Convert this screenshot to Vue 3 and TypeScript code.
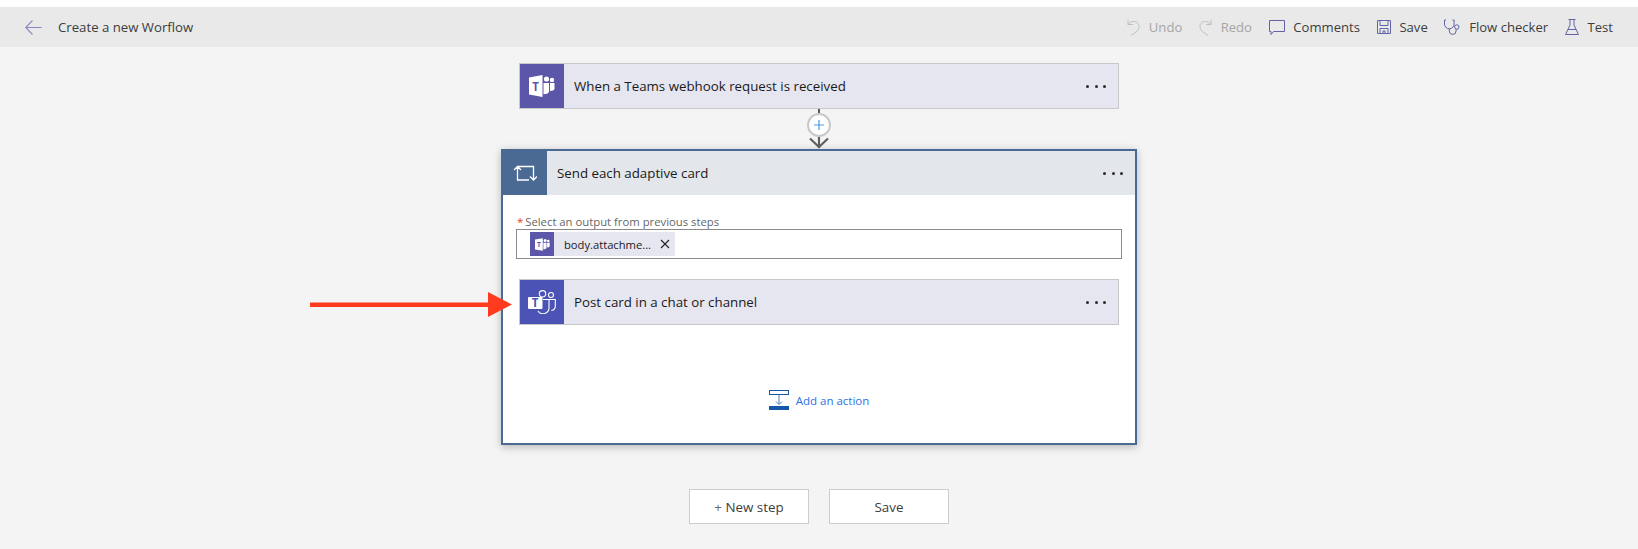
<template>
  <div class="page">
    <header class="toolbar">
      <svg class="back" width="17" height="15" viewBox="0 0 17 15">
        <path d="M7.500.5.700 7.500l6.800 7M.7 7.500H16.500" />
      </svg>
      <span class="title">Create a new Worflow</span>
      <div class="actions">
        <button class="action disabled">
          <svg width="13" height="17" viewBox="0 0 13 17"><path d="M1 .5v5h5M1 5.500C3 2.500 7 1.500 10 3.500c3.500 2.500 2 7-1 9.500l-5 3.500" /></svg>
          <span>Undo</span>
        </button>
        <button class="action disabled">
          <svg width="13" height="17" viewBox="0 0 13 17"><path d="M12 .5v5H7M12 5.500C10 2.500 6 1.500 3 3.500c-3.500 2.500-2 7 1 9.500l5 3.500" /></svg>
          <span>Redo</span>
        </button>
        <button class="action">
          <svg width="16" height="15" viewBox="0 0 16 15"><path d="M.5.500h15v11H4.500l-2.500 3v-3H.5z" /></svg>
          <span>Comments</span>
        </button>
        <button class="action">
          <svg width="14" height="14" viewBox="0 0 14 14"><path d="M.5.500h13v13H.5zM3 .5v5h8V.5M3 13.500V8.500h8v5M6 13.500v-2.500h2v2.500" /></svg>
          <span>Save</span>
        </button>
        <button class="action">
          <svg width="16" height="16" viewBox="0 0 16 16"><path d="M2 1H.5v4a4.800 4.800 0 0 0 9.600 0V1H8.500M5.300 9.800V12a3.400 3.400 0 0 0 6.800 0v-2" /><circle cx="12.800" cy="8" r="2.200" /></svg>
          <span>Flow checker</span>
        </button>
        <button class="action">
          <svg width="14" height="16" viewBox="0 0 14 16"><path d="M3.500.5h7M5 .5v5.500L.5 15.500h13L9 6V.5M3 10.500h8" /></svg>
          <span>Test</span>
        </button>
      </div>
    </header>

    <main class="canvas">
      <section class="step step-trigger">
        <div class="step-icon">
          <svg width="26" height="22" viewBox="0 0 26 22">
            <path class="fill" d="M0 2.500 13.500 0v22L0 19.500z" />
            <text x="6.700" y="15.500" class="t-purple">T</text>
            <circle class="fill" cx="17.500" cy="4" r="2.600" />
            <circle class="fill" cx="23" cy="5" r="2.200" />
            <path class="fill" d="M14.500 8h5.500v8.500c0 1.500-2 2.700-5.500 2.700z" />
            <path class="fill" d="M21 8h4.500v5.500c0 1.500-1.500 2.500-4.500 2.500z" />
          </svg>
        </div>
        <span class="step-name">When a Teams webhook request is received</span>
        <span class="dots"><i></i><i></i><i></i></span>
      </section>

      <div class="connector">
        <span class="stem"></span>
        <span class="plus">
          <svg width="10" height="10" viewBox="0 0 10 10"><path d="M5 0v10M0 5h10" /></svg>
        </span>
        <svg class="chevron" width="20" height="12" viewBox="0 0 20 12"><path d="M1 1.500l9 8.500 9-8.500M10 0v11" /></svg>
      </div>

      <section class="loop">
        <div class="loop-head">
          <div class="loop-icon">
            <svg width="24" height="18" viewBox="0 0 24 18">
              <path d="M4.500 2.500H20.500V16M4.500 2.500V16H16M1 6 4.500 2.500 8 6M17 12.500l3.500 3.500 3.500-3.500" />
            </svg>
          </div>
          <span class="step-name">Send each adaptive card</span>
          <span class="dots"><i></i><i></i><i></i></span>
        </div>

        <div class="loop-body">
          <label class="field-label"><em>*</em>Select an output from previous steps</label>
          <div class="field">
            <span class="chip">
              <span class="chip-icon">
                <svg width="15" height="13" viewBox="0 0 26 22">
                  <path class="fill" d="M0 2.500 13.500 0v22L0 19.500z" />
                  <text x="6.700" y="15.500" class="t-purple">T</text>
                  <circle class="fill" cx="17.500" cy="4" r="2.600" />
                  <circle class="fill" cx="23" cy="5" r="2.200" />
                  <path class="fill" d="M14.500 8h5.500v8.500c0 1.500-2 2.700-5.500 2.700z" />
                  <path class="fill" d="M21 8h4.500v5.500c0 1.500-1.500 2.500-4.500 2.500z" />
                </svg>
              </span>
              <span class="chip-text">body.attachme...</span>
              <svg class="chip-close" width="10" height="10" viewBox="0 0 10 10"><path d="M1 1l8 8M9 1l-8 8" /></svg>
            </span>
          </div>

          <section class="step step-post">
            <div class="step-icon">
              <svg width="28" height="24" viewBox="0 0 28 24">
                <path class="fill" d="M1 7h12.500a1 1 0 0 1 1 1v10a1 1 0 0 1-1 1H1a1 1 0 0 1-1-1V8a1 1 0 0 1 1-1z" />
                <text x="7.200" y="16.800" class="t-indigo">T</text>
                <circle class="ring" cx="14.500" cy="3.800" r="3.200" />
                <circle class="ring" cx="23" cy="5" r="2.500" />
                <path class="ring" d="M15 9.500H27.300v6.500a4.500 4.500 0 0 1-4 4.500M21 9.500V17.500a6 6 0 0 1-11 3.500" />
              </svg>
            </div>
            <span class="step-name">Post card in a chat or channel</span>
            <span class="dots"><i></i><i></i><i></i></span>
          </section>

          <a class="add-action">
            <svg width="20" height="20" viewBox="0 0 20 20">
              <rect x=".5" y=".5" width="19" height="4" fill="none" stroke="#1557a8" />
              <path d="M10 5v9M7 11.500l3 3 3-3" fill="none" stroke="#4a7fc1" />
              <rect y="16" width="20" height="4" fill="#1557a8" />
            </svg>
            <span>Add an action</span>
          </a>
        </div>
      </section>

      <div class="buttons">
        <button class="btn"><span class="btn-plus">+</span> New step</button>
        <button class="btn">Save</button>
      </div>
    </main>

    <svg class="callout" width="202" height="25" viewBox="0 0 202 25">
      <path d="M0 10.500h178V0l24 12.500L178 25V15H0z" />
    </svg>
  </div>
</template>

<script setup lang="ts">
</script>

<style>
html,
body {
  margin: 0;
  background: #fff;
}
</style>

<style scoped>
.page {
  position: relative;
  width: 1638px;
  height: 549px;
  padding-top: 7px;
  box-sizing: border-box;
  overflow: hidden;
  font-family: "Open Sans", "Liberation Sans", sans-serif;
  color: #1f1f1f;
}

.toolbar {
  display: flex;
  align-items: center;
  height: 40px;
  padding: 0 25px;
  background: #e9e9e9;
}

.back {
  fill: none;
  stroke: #8a86bf;
  stroke-width: 1.100;
}

.title {
  margin-left: 16px;
  font-size: 13.200px;
  color: #3c3c3c;
}

.actions {
  display: flex;
  align-items: center;
  gap: 16.700px;
  margin-left: auto;
}

.action {
  display: flex;
  align-items: center;
  gap: 8.700px;
  padding: 0;
  border: 0;
  background: none;
  font: inherit;
  font-size: 13.100px;
  color: #3c3c3c;
}

.action svg {
  fill: none;
  stroke: #6264a7;
  stroke-width: 1;
}

.action.disabled {
  color: #a6a6a6;
}

.action.disabled svg {
  stroke: #c0c0c0;
}

.canvas {
  display: flex;
  flex-direction: column;
  align-items: center;
  height: 502px;
  background: #f4f4f4;
}

.step {
  display: flex;
  align-items: center;
  box-sizing: border-box;
  flex: none;
  width: 600px;
  height: 46px;
  border: 1px solid #c8c8c8;
  background: #e6e6f1;
}

.step-trigger {
  margin-top: 16px;
}

.step-icon {
  display: flex;
  align-items: center;
  justify-content: center;
  flex: none;
  width: 44px;
  height: 44px;
  background: #5b56a8;
}

.step-post .step-icon {
  background: #4b53b5;
}

.fill {
  fill: #fff;
}

.ring {
  fill: none;
  stroke: #fff;
  stroke-width: 1.100;
}

.t-purple,
.t-indigo {
  font-family: "Open Sans", sans-serif;
  font-size: 11.500px;
  font-weight: 700;
  text-anchor: middle;
}

.t-purple {
  fill: #5b56a8;
}

.t-indigo {
  fill: #4b53b5;
}

.step-name {
  margin-left: 10px;
  font-size: 13.300px;
  color: #1a1a1a;
}

.dots {
  display: flex;
  gap: 5.300px;
  margin-left: auto;
  margin-right: 12px;
}

.dots i {
  width: 3px;
  height: 3px;
  border-radius: 50%;
  background: #2b2b2b;
}

.connector {
  position: relative;
  z-index: 1;
  display: flex;
  flex-direction: column;
  align-items: center;
  flex: none;
  height: 40px;
}

.stem {
  width: 2px;
  height: 4px;
  background: #555;
}

.plus {
  display: flex;
  align-items: center;
  justify-content: center;
  box-sizing: border-box;
  width: 24px;
  height: 24px;
  border: 2px solid #c8c8c8;
  border-radius: 50%;
  background: #fff;
}

.plus svg {
  fill: none;
  stroke: #4a9be0;
  stroke-width: 1.200;
}

.chevron {
  fill: none;
  stroke: #5f5f5f;
  stroke-width: 2.200;
}

.loop {
  display: flex;
  flex-direction: column;
  box-sizing: border-box;
  flex: none;
  width: 636px;
  height: 296px;
  border: 2px solid #4a6a94;
  background: #fff;
  box-shadow: 0 2px 8px rgba(0, 0, 0, 0.25);
}

.loop-head {
  display: flex;
  align-items: center;
  flex: none;
  height: 44px;
  background: #e3e7ec;
}

.loop-icon {
  display: flex;
  align-items: center;
  justify-content: center;
  flex: none;
  width: 44px;
  height: 44px;
  background: #4a6a94;
}

.loop-icon svg {
  fill: none;
  stroke: #fff;
  stroke-width: 1.300;
}

.loop-body {
  display: flex;
  flex-direction: column;
  align-items: center;
  flex: 1;
}

.field-label {
  align-self: flex-start;
  margin: 19px 0 0 14px;
  font-size: 11.300px;
  line-height: 15px;
  color: #666;
}

.field-label em {
  margin-right: 2px;
  font-style: normal;
  color: #e03b24;
}

.field {
  display: flex;
  align-items: center;
  box-sizing: border-box;
  width: 606px;
  height: 30px;
  padding-left: 13px;
  border: 1px solid #8a8a8a;
  background: #fff;
}

.chip {
  display: flex;
  align-items: center;
  height: 24px;
  width: 145px;
  background: #e6e6f1;
}

.chip-icon {
  display: flex;
  align-items: center;
  justify-content: center;
  width: 24px;
  height: 24px;
  background: #5b56a8;
}

.chip-text {
  margin-left: 10px;
  font-size: 11.200px;
  color: #1a1a1a;
}

.chip-close {
  margin-left: auto;
  margin-right: 5px;
  fill: none;
  stroke: #222;
  stroke-width: 1.100;
}

.step-post {
  margin-top: 20px;
}

.add-action {
  display: flex;
  align-items: center;
  gap: 7px;
  margin-top: 65px;
  font-size: 11.500px;
  color: #2f6fe8;
}

.buttons {
  display: flex;
  gap: 20px;
  margin-top: 44px;
}

.btn {
  box-sizing: border-box;
  width: 120px;
  height: 35px;
  padding: 0;
  border: 1px solid #cdcdcd;
  background: #fff;
  font: inherit;
  font-size: 13.400px;
  color: #3c3c3c;
}

.btn-plus {
  color: #6b6b6b;
}

.callout {
  position: absolute;
  left: 310px;
  top: 292px;
  fill: #ff3b1f;
}
</style>
